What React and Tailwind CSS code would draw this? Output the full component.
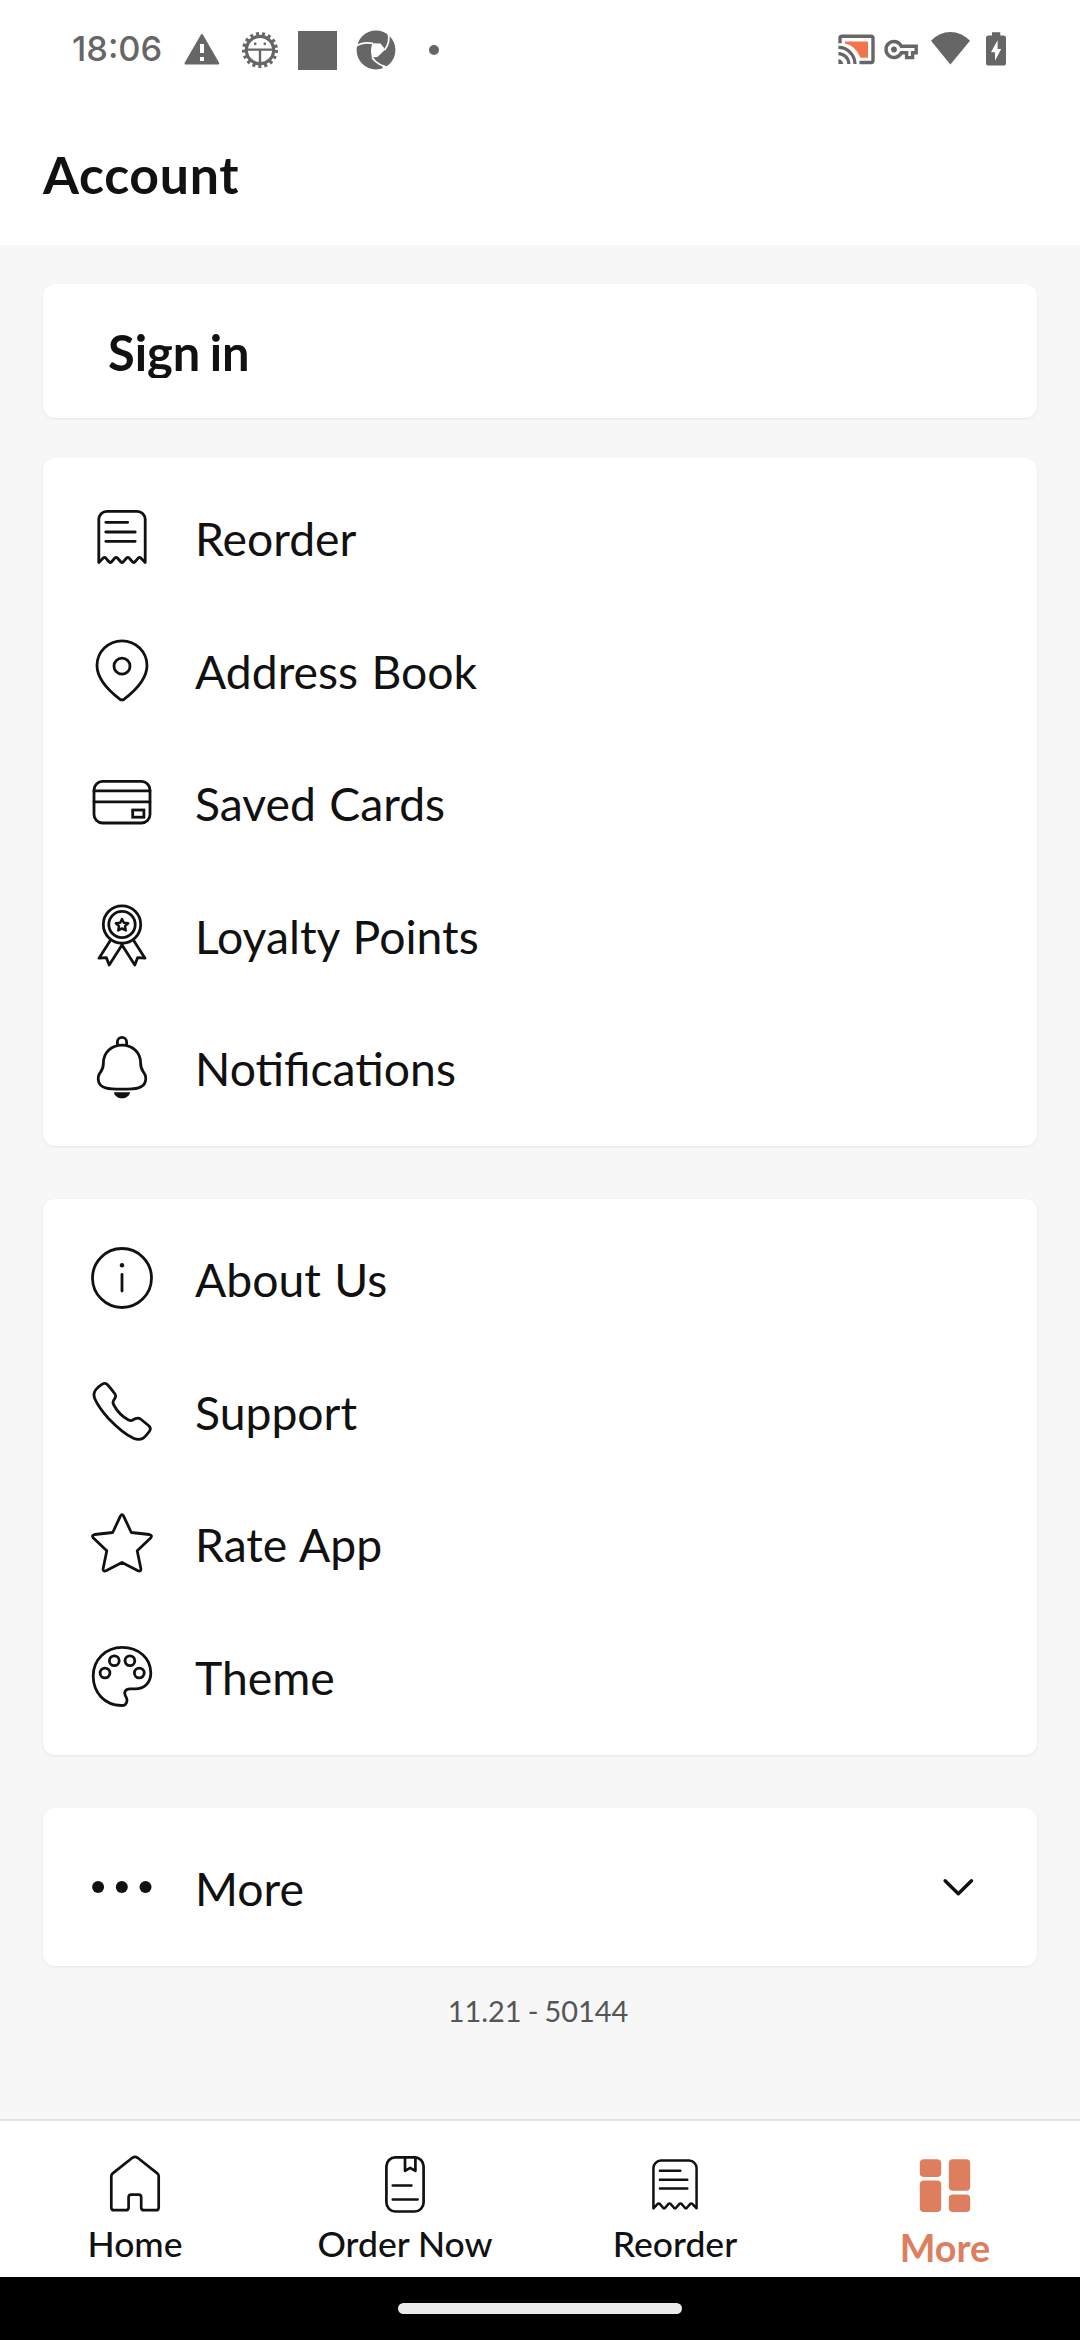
function RowIcon({ children }) {
  return (
    <svg
      viewBox="-33 -33 66 66"
      className="h-[66px] w-[66px] shrink-0"
      fill="none"
      stroke="currentColor"
      strokeWidth="2.8"
      strokeLinecap="round"
      strokeLinejoin="round"
    >
      {children}
    </svg>
  );
}

const receipt = (
  <>
    <path d="M-23.2 25.6V-17.7A8 8 0 0 1-15.2-25.7H15.2A8 8 0 0 1 23.2-17.7V25.6L18.6 20.8Q17.5 19.9 16.4 20.8L12.8 25Q11.7 26 10.6 25L7 20.8Q5.9 19.9 4.8 20.8L1.1 25Q0 26 -1.1 25L-4.8 20.8Q-5.9 19.9-7 20.8L-10.6 25Q-11.7 26-12.8 25L-16.4 20.8Q-17.5 19.9-18.6 20.8Z" />
    <path d="M-16.2-14.7H5.7M-16.2-5H13.2M-16.2 4.3H13.2" />
  </>
);

const pin = (
  <>
    <path d="M-2.2 29.2C-14 20.2-25 8.9-25-4.4A25 24.8 0 0 1 25-4.4C25 8.9 14 20.2 2.2 29.2Q0 30.6-2.2 29.2Z" />
    <circle cy="-3.8" r="8" />
  </>
);

const card = (
  <>
    <rect x="-28" y="-20.6" width="56" height="41.6" rx="8.5" />
    <path d="M-28-11.2H28M-28-.2H28" />
    <rect x="10.7" y="8" width="11.2" height="7.2" strokeLinejoin="miter" />
  </>
);

const medal = (
  <>
    <circle cy="-10.5" r="18.7" />
    <circle cy="-10.5" r="13.2" />
    <path
      strokeWidth="2.4"
      d="M0-16L1.8-12.2L6.2-11.7L3-8.8L3.8-4.6L0-6.6L-3.8-4.6L-3-8.8L-6.2-11.7L-1.8-12.2Z"
    />
    <path d="M-12 6L-23 23.2L-15.6 22.7L-12.8 30L.3 9.6M12 6L23 23.2L15.6 22.7L12.8 30L-.3 9.6" />
  </>
);

const bell = (
  <>
    <path d="M0-21.8C-11-21.8-18.6-14-18.6-4C-18.6 1-19.3 2.2-21.3 4.8C-24 8.2-24.3 11.5-23.3 14.8C-21.3 21-15 22.2 0 22.2S21.3 21 23.3 14.8C24.3 11.5 24 8.2 21.3 4.8C19.3 2.2 18.6 1 18.6-4C18.6-14 11-21.8 0-21.8Z" />
    <path d="M-4.6-22.5V-25A4.6 4.6 0 0 1 4.6-25V-22.5" />
    <path d="M-8.2 25.2H8.2C7 29.2 4 31.2 0 31.2C-4 31.2-7 29.2-8.2 25.2Z" fill="currentColor" stroke="none" />
  </>
);

const info = (
  <>
    <circle r="29.5" />
    <circle cy="-12.8" r="2.2" fill="currentColor" stroke="none" />
    <path d="M0-3.5V13" />
  </>
);

const phone = (
  <path d="M-20.5-26.3C-18.5-28-16-28-14.3-26C-11.5-23-9-19.8-7-17C-6-15.5-6-14.5-6.8-13.2L-8.6-10.3C-9.3-9-9-7.5-8.2-6C-5 0 0 5.5 6.5 9C8 9.8 9.3 9.9 10.8 9L13.5 7.6C15.3 6.8 17 6.8 18.5 8L26.5 14.5C28.8 16.5 28.8 18.5 27.3 20.5C25.5 23 23.5 25.5 21 27.3C18 29 15 28.8 11.5 27.3C1 22.5-6.5 14.8-13.5 7.5C-19.5 .8-24.5-6-27.3-12.5C-28.5-15.5-28-19-26-21.5C-24.5-23.3-22.5-24.9-20.5-26.3Z" />
);

const star = (
  <path d="M-1.5-27.1Q0-29.6 1.5-27.1L9.3-10.5L27.3-8.5Q30.8-7.6 28.6-5L15.2 7.7L18.9 25.8Q19 29 16 27.8L0 19.5L-16 27.8Q-19 29-18.9 25.8L-15.2 7.7L-28.6-5Q-30.8-7.6-27.3-8.5L-9.3-10.5Z" />
);

const palette = (
  <>
    <path d="M0-28.6C17-28.6 28.8-17.5 28.8-3C28.8 7 22 12.8 13 12.8H8C3 12.8 1.8 16.5 3.3 19.5C4 21 5 22 5 24.3C5 28 3 29.6-1 29.5C-17 29-28.8 17-28.8 0C-28.8-16.5-16-28.6 0-28.6Z" />
    <circle cx="-7.7" cy="-15.3" r="4.9" />
    <circle cx="7.9" cy="-15.3" r="4.9" />
    <circle cx="-17" cy="-3" r="4.9" />
    <circle cx="17.3" cy="-3" r="4.9" />
  </>
);

const dots = (
  <g fill="currentColor" stroke="none">
    <circle cx="-23.9" r="6" />
    <circle cx="-.2" r="6" />
    <circle cx="23.5" r="6" />
  </g>
);

function Row({ icon, label, children }) {
  return (
    <div className="flex h-[132.5px] items-center pr-[62px] pl-[45.5px]">
      <RowIcon>{icon}</RowIcon>
      <span className="ml-[40.5px] flex-1 pt-[2px] text-[46.3px] leading-[56px] [word-spacing:1.5px]">{label}</span>
      {children}
    </div>
  );
}

function Card({ className, children }) {
  return (
    <section className={`rounded-[12px] bg-white shadow-[0_1px_3px_rgba(0,0,0,0.07)] ${className}`}>
      {children}
    </section>
  );
}

function Tab({ label, children, active }) {
  return (
    <div className={`flex flex-1 flex-col items-center pt-[30px] ${active ? "text-[#dd7e5f]" : ""}`}>
      <svg
        viewBox="-33 -33 66 66"
        className="h-[66px] w-[66px]"
        fill="none"
        stroke="currentColor"
        strokeWidth="2.7"
        strokeLinecap="round"
        strokeLinejoin="round"
      >
        {children}
      </svg>
      <span
        className={
          active
            ? "mt-[9px] text-[37.8px] leading-[44px] font-bold"
            : "mt-[5px] text-[35.5px] leading-[44px] font-medium"
        }
      >
        {label}
      </span>
    </div>
  );
}

function StatusBar() {
  return (
    <div className="flex h-[100px] items-center pr-[74px] pl-[72px] text-[#666]">
      <span className="w-[100px] pb-[2px] font-['Inter',sans-serif] text-[34.4px] leading-[40px] font-medium">18:06</span>
      <svg viewBox="182 30 40 40" className="ml-[10px] h-10 w-10" fill="currentColor">
        <path d="M200.7 35Q201.9 33 203.1 35L219 62.5Q219.8 64.5 217.8 64.5H186Q184 64.5 184.8 62.5Z" />
        <path d="M200 44h4v9h-4zM200 57h4v4h-4z" fill="#fff" />
      </svg>
      <svg viewBox="-20 -20 40 40" className="ml-[18px] h-10 w-10" fill="none" stroke="currentColor">
        <circle r="13.7" strokeWidth="3.2" />
        <circle r="16.2" strokeWidth="3.6" strokeDasharray="3 2.988" />
        <path d="M-13-.4H13M0-.4V13" strokeWidth="2.4" />
        <g fill="currentColor" stroke="none">
          <circle cx="-4.8" cy="-6.2" r="1.4" />
          <circle cx="4.8" cy="-6.2" r="1.4" />
        </g>
      </svg>
      <div className="ml-[18px] size-[39px] bg-[#666]" />
      <svg viewBox="-20 -20 40 40" className="ml-[18.5px] h-10 w-10">
        <circle r="19.4" fill="currentColor" />
        <path d="M-3.5-6.8L4.5-6.6L9.3-.6L1.4 7L-4 7.6Q-6.2 0-3.5-6.8Z" fill="#fff" />
        <g fill="none" stroke="#fff" strokeWidth="1.8">
          <path d="M12.3-17Q14.5-8 8.7 0" />
          <path d="M-20-4Q-13-8.5-3-6.7" />
          <path d="M-4 7.4Q2 16 14.5 17.5" />
        </g>
        <path d="M7 20.5Q8 18 5 15L14 17.5L12 20.5Z" fill="#fff" />
      </svg>
      <div className="ml-[33px] size-[10px] rounded-full bg-[#666]" />
      <div className="flex-1" />
      <svg viewBox="836 30 41 40" className="h-10 w-[41px]" fill="none" stroke="currentColor">
        <path d="M845 41.5H868V57.8H860.5Q856 46 845 43.5Z" fill="#f2764d" stroke="none" />
        <path d="M840 43.3V38.2Q840 36.2 842 36.2H871Q873 36.2 873 38.2V60.5Q873 62.5 871 62.5H859.5" strokeWidth="3.4" />
        <path d="M838.4 47.4A16.6 16.6 0 0 1 855 64M838.4 53.6A10.4 10.4 0 0 1 848.8 64" strokeWidth="3.2" />
        <path d="M838.4 59.3A4.7 4.7 0 0 1 843.1 64H838.4Z" fill="currentColor" stroke="none" />
      </svg>
      <svg viewBox="883 30 38 40" className="ml-[6px] h-10 w-[38px]" fill="none" stroke="currentColor">
        <path d="M901.3 46.2H916.2V52.8H912.6V57.6H906.6V52.8H901.3A8 8 0 1 1 901.3 46.2Z" strokeWidth="3.4" />
        <circle cx="894" cy="49.5" r="2.9" fill="currentColor" stroke="none" />
      </svg>
      <svg viewBox="930 30 42 40" className="ml-[9px] h-10 w-[42px]" fill="currentColor">
        <path d="M950.4 64.6L931 40.8Q939.5 32.1 950.4 32.1T970 40.8Z" />
      </svg>
      <svg viewBox="984 30 22 40" className="ml-[12px] h-10 w-[22px]" fill="currentColor">
        <path d="M992 32.2H1000.3V35.4H1003.5Q1006 35.4 1006 38V63Q1006 65.6 1003.4 65.6H988.6Q986 65.6 986 63V38Q986 35.4 988.6 35.4H992Z" />
        <path d="M997.6 40.3L991 52.2H995V60.8L1001.2 49H997.6Z" fill="#fff" />
      </svg>
    </div>
  );
}

export default function App() {
  return (
    <div className="flex h-[2340px] w-[1080px] flex-col overflow-hidden bg-[#f7f7f7] font-['Lato',sans-serif] text-[#111]">
      <header className="h-[245px] bg-white">
        <StatusBar />
        <h1 className="pt-[42px] pl-[43px] text-[51.8px] leading-[64px] font-bold tracking-[0.7px]">Account</h1>
      </header>

      <main className="flex-1 px-[43px] pt-[39px]">
        <Card className="h-[134px] pt-[40px] pl-[65px]">
          <div className="h-[54px] overflow-hidden text-[48.8px] leading-[57px] font-bold [word-spacing:-2.5px]">
            Sign in
          </div>
        </Card>

        <Card className="mt-[40px] py-[12.75px]">
          <Row icon={receipt} label="Reorder" />
          <Row icon={pin} label="Address Book" />
          <Row icon={card} label="Saved Cards" />
          <Row icon={medal} label="Loyalty Points" />
          <Row icon={bell} label="Notifications" />
        </Card>

        <Card className="mt-[53px] py-[13px]">
          <Row icon={info} label="About Us" />
          <Row icon={phone} label="Support" />
          <Row icon={star} label="Rate App" />
          <Row icon={palette} label="Theme" />
        </Card>

        <Card className="mt-[53px] py-[12.75px]">
          <Row icon={dots} label="More">
            <svg
              viewBox="-17 -17 34 34"
              className="h-[34px] w-[34px]"
              fill="none"
              stroke="currentColor"
              strokeWidth="3.4"
              strokeLinecap="round"
              strokeLinejoin="round"
            >
              <path d="M-12.9-6.3L.3 6.8L13.5-6.3" />
            </svg>
          </Row>
        </Card>

        <p className="mt-[27px] pr-[4px] text-center text-[28.9px] leading-[36px] text-[#555] [word-spacing:-1.3px]">
          11.21 - 50144
        </p>
      </main>

      <nav className="flex h-[158px] border-t-2 border-[#e2e2e2] bg-white">
        <Tab label="Home">
          <path d="M-2.6-26.2Q0-28 2.6-26.2L22.3-10.6Q23.7-9.5 23.7-7.8V23.4Q23.7 26.2 21 26.2H9Q6.2 26.2 6.2 23.4V13.4Q6.2 10.7 3.6 10.7H-3.8Q-6.4 10.7-6.4 13.4V23.4Q-6.4 26.2-9.2 26.2H-21Q-23.7 26.2-23.7 23.4V-7.8Q-23.7-9.5-22.3-10.6Z" />
        </Tab>
        <Tab label="Order Now">
          <rect x="-18.6" y="-26.7" width="37.2" height="54.2" rx="9" />
          <path d="M0-26.5V-13.2L5.2-16.2L10.4-13.2V-26.5M-12.2 1.5H6.4M-12.2 15.5H12.6" />
        </Tab>
        <Tab label="Reorder">
          <g transform="translate(0 .5) scale(.93)">{receipt}</g>
        </Tab>
        <Tab label="More" active>
          <g fill="currentColor" stroke="none">
            <rect x="-25.2" y="-24.7" width="21.4" height="17.6" rx="4" />
            <rect x="-25.2" y="-3.4" width="21.4" height="31.3" rx="4" />
            <rect x="3.8" y="-24.7" width="21.4" height="31.5" rx="4" />
            <rect x="3.8" y="10.6" width="21.4" height="17.3" rx="4" />
          </g>
        </Tab>
      </nav>

      <div className="flex h-[63px] justify-center bg-black pt-[26px]">
        <div className="h-[10.5px] w-[284px] rounded-full bg-[#ebebeb]" />
      </div>
    </div>
  );
}
